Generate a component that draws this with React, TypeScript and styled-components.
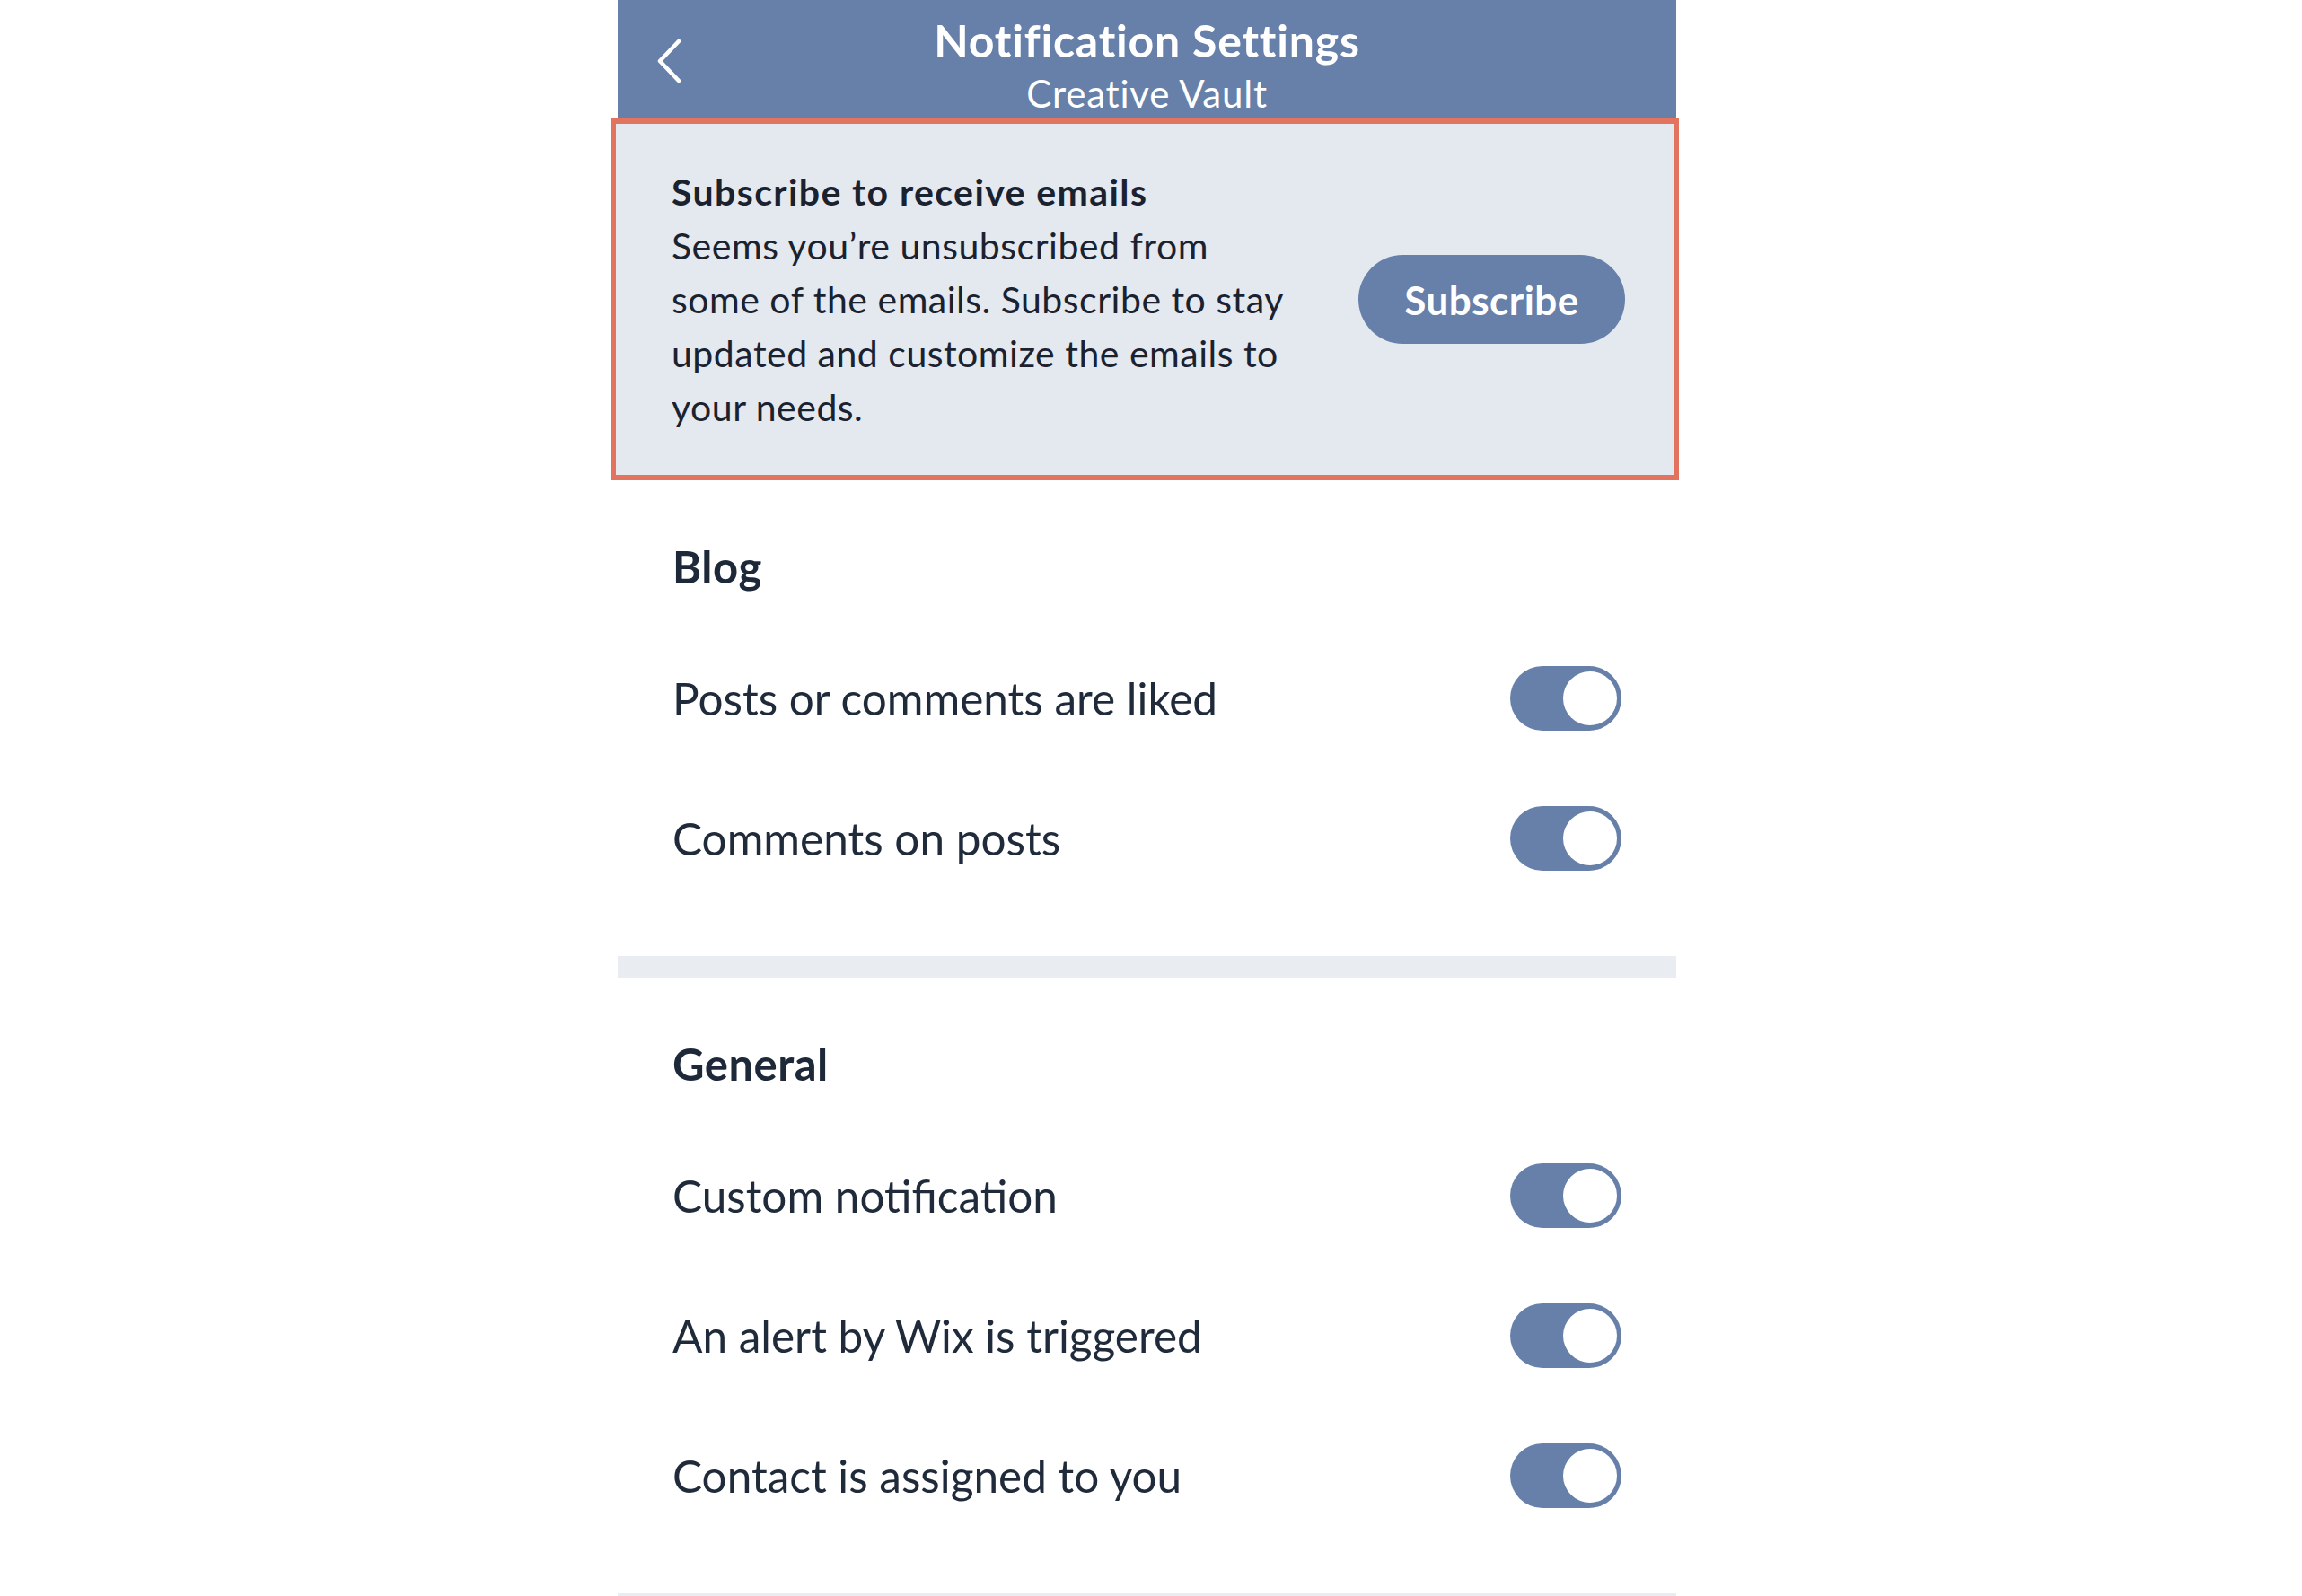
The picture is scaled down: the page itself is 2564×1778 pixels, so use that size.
import React, { useState } from "react";
import styled, { createGlobalStyle } from "styled-components";

const GlobalStyle = createGlobalStyle`
  html, body {
    margin: 0;
    padding: 0;
    background: #ffffff;
  }
  body {
    font-family: Lato, "Open Sans", sans-serif;
    color: #1f2a3a;
  }
`;

interface ISetting {
    id: string;
    label: string;
    enabled: boolean;
}

interface ISection {
    title: string;
    settings: ISetting[];
}

const SECTIONS: ISection[] = [
    {
        title: "Blog",
        settings: [
            { id: "liked", label: "Posts or comments are liked", enabled: true },
            { id: "comments", label: "Comments on posts", enabled: true },
        ],
    },
    {
        title: "General",
        settings: [
            { id: "custom", label: "Custom notification", enabled: true },
            { id: "alert", label: "An alert by Wix is triggered", enabled: true },
            { id: "contact", label: "Contact is assigned to you", enabled: true },
        ],
    },
];

const Screen = styled.div`
  width: 1179px;
  margin-left: 688px;
  min-height: 1778px;
  background: #ffffff;
`;

const Header = styled.header`
  display: grid;
  grid-template-columns: 140px 1fr 140px;
  align-items: start;
  height: 132px;
  background: #6680aa;
  color: #ffffff;
`;

const BackButton = styled.button`
  margin: 44px 0 0 44px;
  padding: 0;
  width: 28px;
  height: 48px;
  border: none;
  background: transparent;
  cursor: pointer;
`;

const HeaderTitles = styled.div`
  display: flex;
  flex-direction: column;
  align-items: center;
  padding-top: 16px;
  gap: 6px;
`;

const Title = styled.h1`
  margin: 0;
  font-size: 50px;
  line-height: 58px;
  font-weight: 700;
  letter-spacing: 0.8px;
`;

const Subtitle = styled.div`
  font-size: 42px;
  line-height: 48px;
  font-weight: 400;
  letter-spacing: 0.8px;
`;

const Banner = styled.section`
  display: flex;
  align-items: center;
  justify-content: space-between;
  gap: 30px;
  margin: 0 -3px 0 -8px;
  padding: 0 54px 0 62px;
  height: 403px;
  box-sizing: border-box;
  background: #e4e8ef;
  border: 6px solid #e2735e;
`;

const BannerText = styled.div`
  max-width: 690px;
  font-size: 41px;
  line-height: 60px;
  letter-spacing: 0.5px;
  color: #1a2230;
`;

const BannerHeading = styled.div`
  font-weight: 700;
  letter-spacing: 1.4px;
`;

const BannerBody = styled.p`
  margin: 0;
`;

const SubscribeButton = styled.button`
  flex-shrink: 0;
  width: 297px;
  height: 99px;
  border: none;
  border-radius: 50px;
  background: #6680aa;
  color: #ffffff;
  font-family: Lato, "Open Sans", sans-serif;
  font-size: 44px;
  font-weight: 700;
  letter-spacing: 0.5px;
  cursor: pointer;
`;

const Section = styled.section`
  padding: 66px 61px 53px;
`;

const SectionTitle = styled.h2`
  margin: 0 0 39px;
  font-size: 49px;
  line-height: 60px;
  font-weight: 700;
  letter-spacing: 0.5px;
  color: #1d2838;
`;

const Row = styled.div`
  display: flex;
  align-items: center;
  justify-content: space-between;
  height: 156px;
`;

const RowLabel = styled.span`
  font-size: 49.5px;
  font-weight: 400;
  color: #1f2a3a;
`;

const Track = styled.button<{ $on: boolean }>`
  position: relative;
  width: 124px;
  height: 72px;
  padding: 0;
  border: none;
  border-radius: 36px;
  background: ${(p) => (p.$on ? "#6680aa" : "#c9d1de")};
  cursor: pointer;
`;

const Knob = styled.span<{ $on: boolean }>`
  position: absolute;
  top: 6px;
  left: ${(p) => (p.$on ? "59px" : "5px")};
  width: 60px;
  height: 60px;
  border-radius: 50%;
  background: #ffffff;
`;

const Divider = styled.div`
  height: 24px;
  background: #e9ecf1;
`;

function Toggle({ on, onChange }: { on: boolean; onChange: () => void }) {
    return (
        <Track $on={on} onClick={onChange} role="switch" aria-checked={on}>
            <Knob $on={on} />
        </Track>
    );
}

export default function App() {
    const [state, setState] = useState<Record<string, boolean>>(() => {
        const init: Record<string, boolean> = {};
        SECTIONS.forEach((s) => s.settings.forEach((item) => (init[item.id] = item.enabled)));
        return init;
    });

    const flip = (id: string) => setState((prev) => ({ ...prev, [id]: !prev[id] }));

    return (
        <>
            <GlobalStyle />
            <Screen>
                <Header>
                    <BackButton aria-label="Back">
                        <svg width="28" height="48" viewBox="0 0 28 48" fill="none">
                            <path
                                d="M24 2 L3 24 L24 46"
                                stroke="#ffffff"
                                strokeWidth="4.5"
                                strokeLinecap="round"
                                strokeLinejoin="round"
                            />
                        </svg>
                    </BackButton>
                    <HeaderTitles>
                        <Title>Notification Settings</Title>
                        <Subtitle>Creative Vault</Subtitle>
                    </HeaderTitles>
                    <div />
                </Header>

                <Banner>
                    <BannerText>
                        <BannerHeading>Subscribe to receive emails</BannerHeading>
                        <BannerBody>
                            Seems you’re unsubscribed from some of the emails. Subscribe to stay
                            updated and customize the emails to your needs.
                        </BannerBody>
                    </BannerText>
                    <SubscribeButton>Subscribe</SubscribeButton>
                </Banner>

                {SECTIONS.map((section) => (
                    <React.Fragment key={section.title}>
                        <Section>
                            <SectionTitle>{section.title}</SectionTitle>
                            {section.settings.map((item) => (
                                <Row key={item.id}>
                                    <RowLabel>{item.label}</RowLabel>
                                    <Toggle on={state[item.id]} onChange={() => flip(item.id)} />
                                </Row>
                            ))}
                        </Section>
                        <Divider />
                    </React.Fragment>
                ))}
            </Screen>
        </>
    );
}
